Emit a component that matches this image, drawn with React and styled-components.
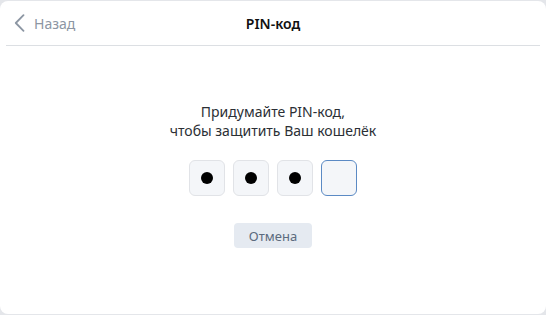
import React from "react";
import styled, { createGlobalStyle } from "styled-components";

const Global = createGlobalStyle`
  html, body { margin: 0; padding: 0; background: #e4e6ea; }
  body { font-family: "Noto Sans", "Open Sans", sans-serif; }
  * { box-sizing: border-box; }
`;

const Card = styled.div`
  margin-top: 1px;
  height: 313px;
  background: #fff;
  border-radius: 8px;
  display: flex;
  flex-direction: column;
`;

const Header = styled.div`
  height: 45px;
  margin: 0 6px;
  border-bottom: 1px solid #dcdfe3;
  display: grid;
  grid-template-columns: 1fr auto 1fr;
  align-items: center;
`;

const Back = styled.button`
  justify-self: start;
  display: flex;
  align-items: center;
  gap: 9px;
  border: 0;
  background: none;
  padding: 0 0 0 8px;
  font: inherit;
  font-size: 14px;
  color: #8c96a3;
  cursor: pointer;
`;

const Title = styled.div`
  font-size: 14px;
  font-weight: 600;
  color: #111;
`;

const Body = styled.div`
  display: flex;
  flex-direction: column;
  align-items: center;
  padding-top: 56px;
`;

const Prompt = styled.div`
  text-align: center;
  font-size: 14px;
  line-height: 19px;
  color: #2b2f35;
`;

const Pins = styled.div`
  display: flex;
  gap: 8px;
  margin-top: 20px;
`;

const Cell = styled.div`
  width: 36px;
  height: 36px;
  border-radius: 6px;
  background: #f4f6f9;
  border: 1px solid ${(p) => (p.$active ? "#5b8ac4" : "#e1e3e7")};
  display: flex;
  align-items: center;
  justify-content: center;
`;

const Dot = styled.span`
  width: 12px;
  height: 12px;
  border-radius: 50%;
  background: #000;
`;

const Cancel = styled.button`
  margin-top: 27px;
  width: 78px;
  height: 25px;
  border: 0;
  border-radius: 4px;
  background: #e5eaf1;
  color: #5c6b7e;
  font: inherit;
  font-size: 13px;
  cursor: pointer;
`;

export default function App() {
  const filled = 3;
  return (
    <>
      <Global />
      <Card>
        <Header>
          <Back>
            <svg width="11" height="18" viewBox="0 0 11 18" fill="none">
              <path d="M9.5 1.2 L1.8 9 L9.5 16.8" stroke="#8c96a3" strokeWidth="1.8" strokeLinecap="round" strokeLinejoin="round" />
            </svg>
            Назад
          </Back>
          <Title>PIN-код</Title>
          <div />
        </Header>
        <Body>
          <Prompt>
            Придумайте PIN-код,
            <br />
            чтобы защитить Ваш кошелёк
          </Prompt>
          <Pins>
            {[0, 1, 2, 3].map((i) => (
              <Cell key={i} $active={i === filled}>
                {i < filled && <Dot />}
              </Cell>
            ))}
          </Pins>
          <Cancel>Отмена</Cancel>
        </Body>
      </Card>
    </>
  );
}
